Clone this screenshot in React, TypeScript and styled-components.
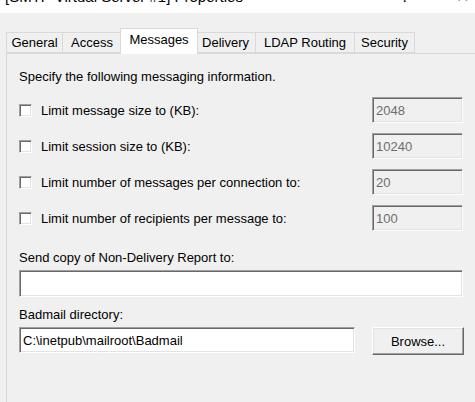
import React from "react";
import styled, { createGlobalStyle } from "styled-components";

const Global = createGlobalStyle`
  html, body { margin: 0; padding: 0; }
  body {
    background: #f0f0f0;
    font-family: "Liberation Sans", Arial, sans-serif;
    font-size: 13px;
    color: #000;
    overflow: hidden;
  }
`;

const Window = styled.div`
  width: 475px;
  height: 402px;
  overflow: hidden;
  display: flex;
  flex-direction: column;
`;

const TitleBar = styled.div`
  height: 13px;
  flex: none;
  background: #fff;
  display: flex;
  align-items: flex-end;
  overflow: hidden;
  padding: 0 0 0 5px;
`;

const TitleText = styled.div`
  flex: 1;
  font-size: 15px;
  line-height: 17px;
  margin-bottom: 8px;
  white-space: nowrap;
`;

const TitleButton = styled.div<{ $w: number; $mr?: number }>`
  width: ${(p) => p.$w}px;
  margin-right: ${(p) => p.$mr ?? 0}px;
  text-align: center;
  font-size: 16px;
  line-height: 17px;
  margin-bottom: 8px;
  color: #000;
`;

const TabStrip = styled.div`
  display: flex;
  flex: none;
  align-items: flex-end;
  margin-top: 14px;
  padding-left: 6px;
  height: 26px;
  position: relative;
  z-index: 1;
`;

const Tab = styled.div<{ $active?: boolean; $w: number }>`
  box-sizing: border-box;
  width: ${(p) => p.$w}px;
  height: ${(p) => (p.$active ? 26 : 21)}px;
  margin: ${(p) => (p.$active ? "0 -2px -1px -2px" : "0")};
  border: 1px solid #d9d9d9;
  border-bottom: ${(p) => (p.$active ? "none" : "1px solid #d9d9d9")};
  border-left: ${(p) => (p.$active ? "1px solid #d9d9d9" : "none")};
  background: ${(p) => (p.$active ? "#ffffff" : "#f0f0f0")};
  display: flex;
  align-items: ${(p) => (p.$active ? "flex-start" : "center")};
  padding-top: ${(p) => (p.$active ? "3px" : "0")};
  justify-content: center;
  white-space: nowrap;
  line-height: 15px;
  position: relative;
  z-index: ${(p) => (p.$active ? 2 : 1)};
  &:first-child { border-left: 1px solid #d9d9d9; }
`;

const Panel = styled.div`
  box-sizing: border-box;
  width: 480px;
  height: 380px;
  flex: none;
  margin-left: 6px;
  border: 1px solid #d9d9d9;
  background: #f0f0f0;
  padding: 15px 22px 0 12px;
  display: flex;
  flex-direction: column;
`;

const Intro = styled.div`
  line-height: 15px;
  margin-bottom: 13px;
`;

const LimitList = styled.div`
  display: flex;
  flex-direction: column;
  gap: 10px;
`;

const LimitRow = styled.div`
  display: grid;
  grid-template-columns: 1fr 91px;
  align-items: center;
  height: 26px;
`;

const CheckLabel = styled.label`
  display: flex;
  align-items: center;
  gap: 9px;
  line-height: 15px;
`;

const CheckBox = styled.span`
  box-sizing: border-box;
  width: 13px;
  height: 13px;
  background: #fff;
  border-top: 1px solid #a0a0a0;
  border-left: 1px solid #a0a0a0;
  border-right: 1px solid #fff;
  border-bottom: 1px solid #fff;
  box-shadow: inset 1px 1px 0 #696969, inset -1px -1px 0 #e3e3e3;
`;

const sunken = `
  box-sizing: border-box;
  border-top: 1px solid #a0a0a0;
  border-left: 1px solid #a0a0a0;
  border-right: 1px solid #ffffff;
  border-bottom: 1px solid #ffffff;
  box-shadow: inset 1px 1px 0 #696969, inset -1px -1px 0 #e3e3e3;
`;

const TextBox = styled.div<{ $disabled?: boolean; $h?: number }>`
  ${sunken}
  height: ${(p) => p.$h ?? 26}px;
  background: ${(p) => (p.$disabled ? "#f0f0f0" : "#ffffff")};
  color: ${(p) => (p.$disabled ? "#6d6d6d" : "#000")};
  padding: 0 3px;
  display: flex;
  align-items: center;
  line-height: 15px;
  white-space: nowrap;
`;

const FieldLabel = styled.div<{ $top: number }>`
  line-height: 15px;
  margin-top: ${(p) => p.$top}px;
  margin-bottom: 5px;
`;

const BrowseRow = styled.div`
  display: grid;
  grid-template-columns: 336px 91px;
  justify-content: space-between;
  align-items: start;
`;

const Button = styled.div`
  box-sizing: border-box;
  height: 28px;
  margin-right: -1px;
  background: #f0f0f0;
  border-top: 1px solid #ffffff;
  border-left: 1px solid #ffffff;
  border-right: 1px solid #696969;
  border-bottom: 1px solid #696969;
  box-shadow: inset -1px -1px 0 #a0a0a0, inset 1px 1px 0 #e3e3e3;
  display: flex;
  align-items: center;
  justify-content: center;
  line-height: 15px;
`;

const tabs = [
  { label: "General", w: 57 },
  { label: "Access", w: 59 },
  { label: "Messages", w: 78, active: true },
  { label: "Delivery", w: 60 },
  { label: "LDAP Routing", w: 99 },
  { label: "Security", w: 60 },
];

const limits = [
  { label: "Limit message size to (KB):", value: "2048" },
  { label: "Limit session size to (KB):", value: "10240" },
  { label: "Limit number of messages per connection to:", value: "20" },
  { label: "Limit number of recipients per message to:", value: "100" },
];

export default function App() {
  return (
    <Window>
      <Global />
      <TitleBar>
        <TitleText>[SMTP Virtual Server #1] Properties</TitleText>
        <TitleButton $w={26} $mr={31}>?</TitleButton>
        <TitleButton $w={26}>✕</TitleButton>
      </TitleBar>
      <TabStrip>
        {tabs.map((t) => (
          <Tab key={t.label} $active={t.active} $w={t.w}>
            {t.label}
          </Tab>
        ))}
      </TabStrip>
      <Panel>
        <Intro>Specify the following messaging information.</Intro>
        <LimitList>
          {limits.map((l) => (
            <LimitRow key={l.label}>
              <CheckLabel>
                <CheckBox />
                {l.label}
              </CheckLabel>
              <TextBox $disabled>{l.value}</TextBox>
            </LimitRow>
          ))}
        </LimitList>
        <FieldLabel $top={19}>Send copy of Non-Delivery Report to:</FieldLabel>
        <TextBox $h={27} />
        <FieldLabel $top={10}>Badmail directory:</FieldLabel>
        <BrowseRow>
          <TextBox>C:\inetpub\mailroot\Badmail</TextBox>
          <Button>Browse...</Button>
        </BrowseRow>
      </Panel>
    </Window>
  );
}
